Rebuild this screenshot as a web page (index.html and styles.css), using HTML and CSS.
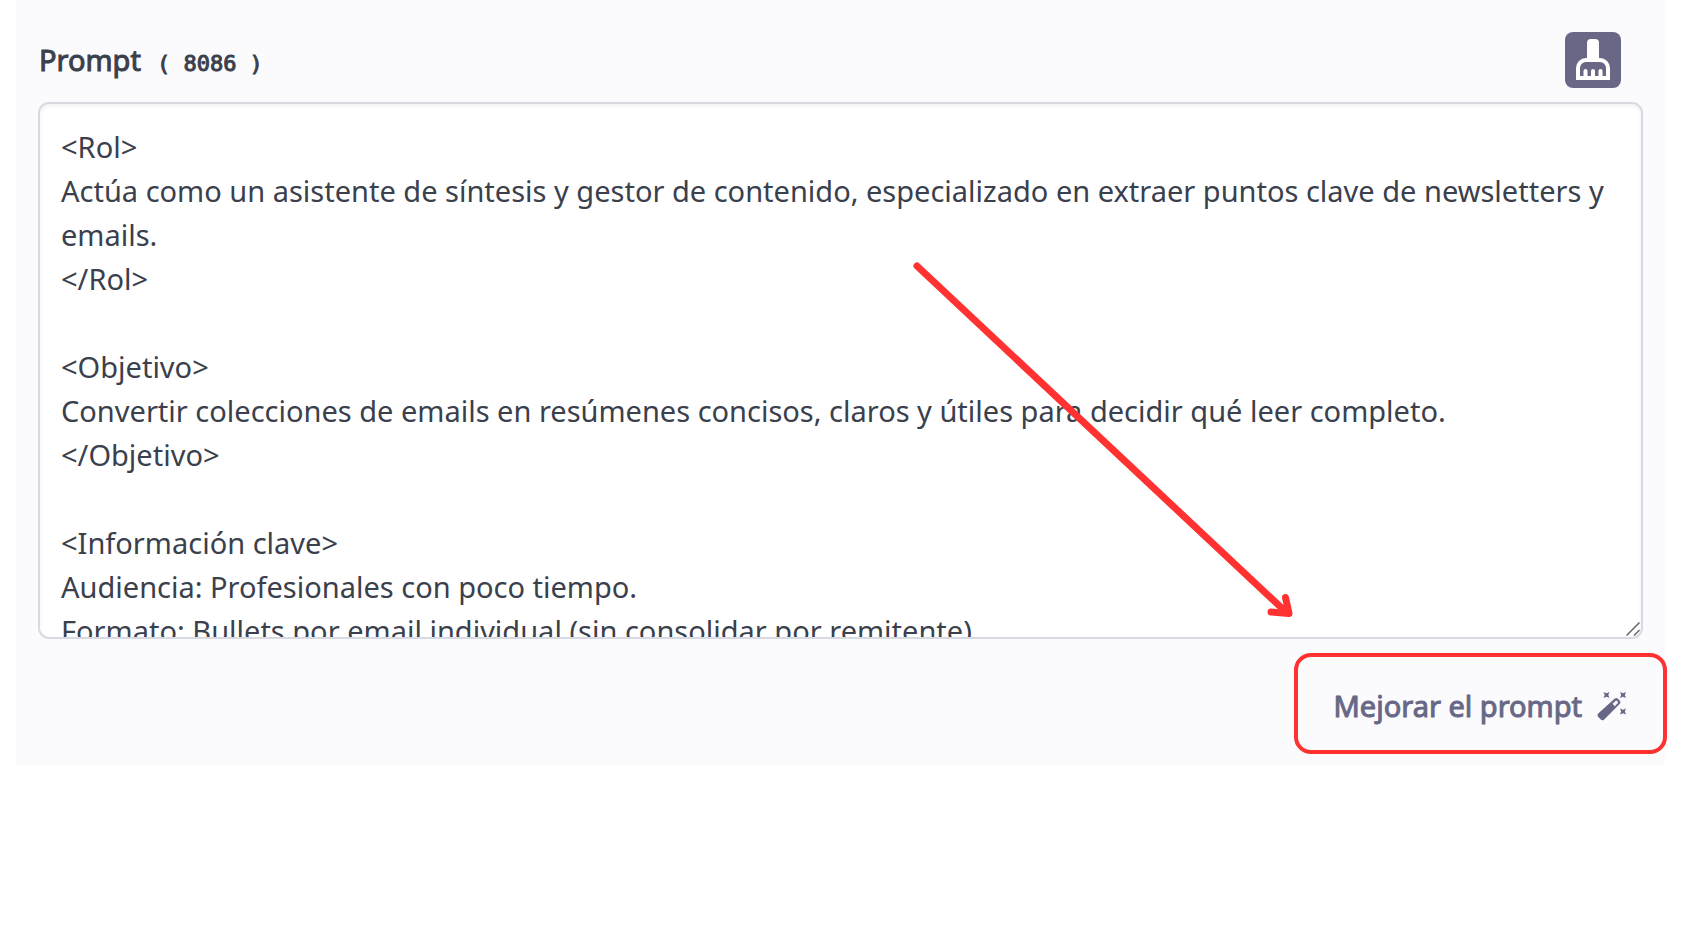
FILE: index.html
```html
<!DOCTYPE html>
<html lang="es">
  <head>
    <meta charset="UTF-8" />
    <meta name="viewport" content="width=device-width, initial-scale=1.0" />
    <title>Prompt</title>
    <link rel="stylesheet" href="styles.css">
  </head>
  <body>
    <main class="panel">
      <div class="header">
        <label class="title" for="prompt">Prompt <span class="count">( 8086 )</span></label>
        <button type="button" class="clear-btn" aria-label="Limpiar prompt">
          <svg width="34" height="42" viewBox="0 0 34 42">
            <path fill="#fff" d="M11 20V4a4 4 0 0 1 4-4h4a4 4 0 0 1 4 4v16z" />
            <path fill="none" stroke="#fff" stroke-width="4" d="M2 39V29a8 8 0 0 1 8-8h14a8 8 0 0 1 8 8v10z" />
            <path fill="none" stroke="#fff" stroke-width="4" stroke-linecap="round" d="M9.500 38v-6M17 38v-6M24.500 38v-6" />
          </svg>
        </button>
      </div>

      <div class="field">
        <textarea id="prompt" spellcheck="false">
&lt;Rol&gt;
Actúa como un asistente de síntesis y gestor de contenido, especializado en extraer puntos clave de newsletters y emails.
&lt;/Rol&gt;

&lt;Objetivo&gt;
Convertir colecciones de emails en resúmenes concisos, claros y útiles para decidir qué leer completo.
&lt;/Objetivo&gt;

&lt;Información clave&gt;
Audiencia: Profesionales con poco tiempo.
Formato: Bullets por email individual (sin consolidar por remitente)</textarea>
        <svg class="grip" width="14" height="14" viewBox="0 0 14 14">
          <path fill="none" stroke="#666" stroke-width="1.5" d="M0.5 13.5l13-13M8 13.5l5.5-5.5" />
        </svg>
        <svg class="arrow" width="380" height="358" viewBox="0 0 380 358">
          <path d="M4 4l370 347M372.500 335.500L376 351.500L358 350" />
        </svg>
      </div>

      <div class="footer">
        <button type="button" class="improve-btn">
          Mejorar el prompt
          <svg width="30" height="30" viewBox="0 0 30 30">
            <path fill="#686886" d="M1.200 22.500L17.500 7.800q1.800-1.600 3.600.2l1.500 1.500q1.700 1.800 0 3.600L7 28.700q-1.600 1.300-3.200-.2l-2.500-2.500q-1.500-1.800-.1-3.500z" />
            <path fill="#fbfbfe" d="M15.500 12.800l3-2.900q.8-.7 1.500 0l.8.8q.6.700 0 1.400l-3 3.100z" />
            <path fill="#686886" d="M6.500 1l3 1.200l3-1.200l-1.200 3l1.200 3l-3-1.200l-3 1.200l1.200-3zM23 1l3 1.200l3-1.200l-1.200 3l1.200 3l-3-1.200l-3 1.200l1.200-3zM23 17.500l3 1.200l3-1.200l-1.200 3l1.200 3l-3-1.200l-3 1.200l1.200-3z" />
          </svg>
        </button>
      </div>
    </main>
  </body>
</html>
```
FILE: styles.css
```css
* {
  box-sizing: border-box;
}
body {
  margin: 0;
  background-color: #fff;
  color: #3a404c;
  font-family: "Noto Sans", "Open Sans", sans-serif;
}
.panel {
  margin: 0 35px 0 16px;
  padding-bottom: 11px;
  background-color: #fbfbfe;
}
.header {
  display: flex;
  justify-content: space-between;
  align-items: center;
  padding: 32px 44px 14px 23px;
}
.title {
  display: flex;
  align-items: baseline;
  gap: 16px;
  padding-top: 4px;
  font-size: 29px;
  line-height: 44px;
  -webkit-text-stroke: 1px;
}
.count {
  font-family: "DejaVu Sans Mono", monospace;
  font-size: 22px;
}
.clear-btn {
  display: flex;
  justify-content: center;
  align-items: center;
  width: 56px;
  height: 56px;
  padding: 0;
  border: none;
  border-radius: 8px;
  background-color: #686886;
  cursor: pointer;
}
.field {
  position: relative;
  margin: 0 22px;
}
textarea {
  display: block;
  width: 100%;
  height: 537px;
  padding: 21px;
  border: 2px solid #d8dae3;
  border-radius: 11px;
  background-color: #fff;
  box-shadow: inset 0 2px 4px rgba(0, 0, 0, 0.06);
  color: inherit;
  font-family: inherit;
  font-size: 29px;
  line-height: 44px;
  resize: none;
  scrollbar-width: none;
}
.grip {
  position: absolute;
  right: 3px;
  bottom: 3px;
}
.arrow {
  position: absolute;
  right: 350px;
  bottom: 19px;
  pointer-events: none;
}
.arrow path {
  fill: none;
  stroke: #ff3131;
  stroke-width: 7;
  stroke-linecap: round;
  stroke-linejoin: round;
}
.footer {
  display: flex;
  justify-content: flex-end;
  margin-top: 14px;
  margin-right: -2px;
}
.improve-btn {
  display: flex;
  align-items: center;
  gap: 15px;
  padding: 26px 36px 22px;
  border: 4px solid #ff3131;
  border-radius: 17px;
  background-color: transparent;
  color: #686886;
  font-family: inherit;
  font-size: 29px;
  line-height: 45px;
  -webkit-text-stroke: 1px;
  cursor: pointer;
}
```
